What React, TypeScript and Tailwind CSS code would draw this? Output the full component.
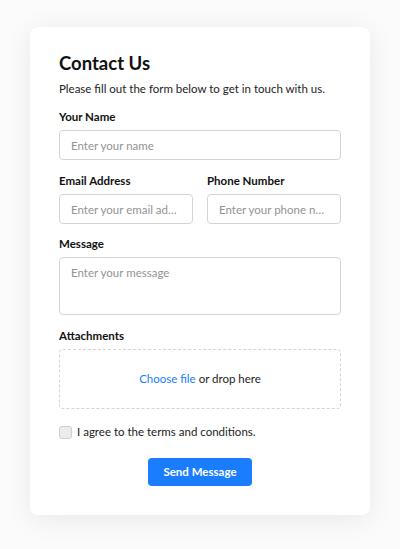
export default function App() {
  return (
    <div
      className="min-h-[549px] w-[400px] bg-[#fbfbfb] px-[30px] pt-[27px] pb-[34px]"
      style={{ fontFamily: 'Lato, "Open Sans", sans-serif' }}
    >
      <div className="rounded-lg bg-white px-[29px] pt-[24px] pb-[29px] shadow-[0_4px_28px_rgba(0,0,0,0.08)]">
        <h1 className="text-[18.5px] font-bold leading-[25px] text-[#111]">Contact Us</h1>
        <p className="mt-[4px] text-[11.5px] leading-[18px] text-[#222]">
          Please fill out the form below to get in touch with us.
        </p>

        {/* Name */}
        <label className="mt-[10px] block text-[11.5px] font-bold leading-[18px] text-[#111]">Your Name</label>
        <input
          className="mt-[4px] block h-[30px] w-full rounded border border-[#d4d4d4] px-[11px] text-[11.5px] text-[#333] outline-none placeholder:text-[#939393]"
          placeholder="Enter your name"
        />

        {/* Email + phone */}
        <div className="mt-[12px] grid grid-cols-2 gap-[14px]">
          <div>
            <label className="block text-[11.5px] font-bold leading-[18px] text-[#111]">Email Address</label>
            <input
              className="mt-[4px] block h-[30px] w-full truncate rounded border border-[#d4d4d4] px-[11px] text-[11.5px] text-[#333] outline-none placeholder:text-[#939393]"
              placeholder="Enter your email add..."
            />
          </div>
          <div>
            <label className="block text-[11.5px] font-bold leading-[18px] text-[#111]">Phone Number</label>
            <input
              className="mt-[4px] block h-[30px] w-full truncate rounded border border-[#d4d4d4] px-[11px] text-[11.5px] text-[#333] outline-none placeholder:text-[#939393]"
              placeholder="Enter your phone nu..."
            />
          </div>
        </div>

        {/* Message */}
        <label className="mt-[11px] block text-[11.5px] font-bold leading-[18px] text-[#111]">Message</label>
        <textarea
          className="mt-[4px] block h-[58px] w-full resize-none rounded border border-[#d4d4d4] px-[11px] py-[6px] text-[11.5px] text-[#333] outline-none placeholder:text-[#939393]"
          placeholder="Enter your message"
        />

        {/* Attachments */}
        <label className="mt-[12px] block text-[11.5px] font-bold leading-[18px] text-[#111]">Attachments</label>
        <div className="mt-[4px] flex h-[60px] items-center justify-center rounded border border-dashed border-[#d4d4d4] text-[11.5px] text-[#222]">
          <span className="text-[#1a7dff]">Choose file</span>
          <span className="ml-[3px]">or drop here</span>
        </div>

        {/* Terms */}
        <div className="mt-[14px] flex h-[18px] items-center gap-[5px]">
          <span className="h-[13px] w-[13px] rounded-[3px] border border-[#cfcfcf] bg-[#ececec]" />
          <span className="text-[11.5px] leading-[18px] text-[#222]">I agree to the terms and conditions.</span>
        </div>

        <div className="mt-[17px] flex justify-center">
          <button className="h-[28px] w-[104px] rounded bg-[#1a7dff] text-[11.5px] font-bold text-white">
            Send Message
          </button>
        </div>
      </div>
    </div>
  );
}
